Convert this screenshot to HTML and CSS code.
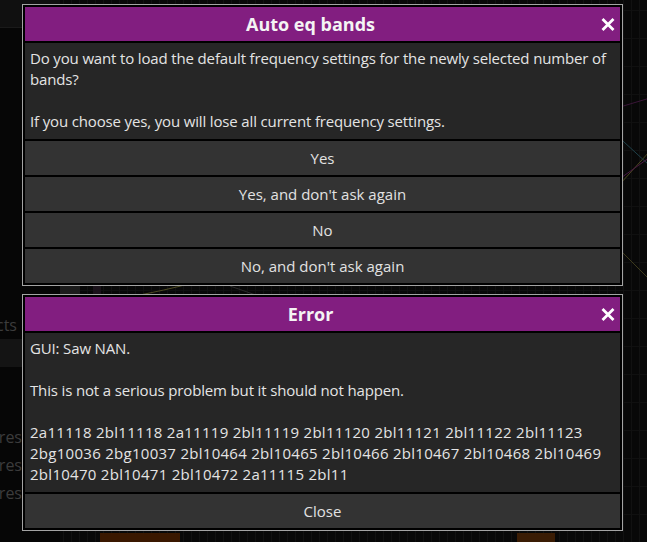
FILE: index.html
```html
<!doctype html>
<html lang="en">
  <head>
    <meta charset="UTF-8" />
    <meta name="viewport" content="width=device-width, initial-scale=1.0" />
    <title>Auto eq bands</title>
    <link rel="stylesheet" href="styles.css">
  </head>
  <body>
    <div class="app">
      <!-- graph canvas behind the dialogs -->
      <svg class="backdrop" width="647" height="542" viewBox="0 0 647 542">
        <line x1="560" y1="250" x2="660" y2="140" stroke="#4a4620" stroke-width="1" />
        <line x1="600" y1="120" x2="660" y2="175" stroke="#1f4048" stroke-width="1" />
        <line x1="600" y1="230" x2="660" y2="290" stroke="#3d3a1c" stroke-width="1" />
        <line x1="590" y1="200" x2="660" y2="150" stroke="#4a1a44" stroke-width="1" />
        <line x1="610" y1="110" x2="660" y2="95" stroke="#3a1638" stroke-width="1" />
        <path d="M140 295 Q165 290 185 285" stroke="#4c4a22" fill="none" />
        <line x1="230" y1="286" x2="270" y2="300" stroke="#2a2a2a" />
        <rect x="60" y="286" width="20" height="9" fill="#1c1c1c" />
        <rect x="93" y="286" width="8" height="9" fill="#1a121a" />
        <rect x="100" y="533" width="80" height="12" fill="#3a1800" />
        <rect x="517" y="533" width="38" height="12" fill="#3a1c04" />
      </svg>
      <aside class="side">
        <div class="side-top"></div>
        <div class="side-label first"><span>Effects</span></div>
        <div class="side-band"></div>
        <div class="side-label"><span>Scores</span></div>
        <div class="side-label"><span>Scores</span></div>
        <div class="side-label"><span>Scores</span></div>
      </aside>
    </div>

    <div class="overlay">
      <section class="dialog">
        <header class="dialog-head">
          <h1 class="title">Auto eq bands</h1>
          <span class="close">
            <svg width="14" height="13" viewBox="0 0 14 13">
              <path d="M1.5 1 L12.5 12 M12.5 1 L1.5 12" stroke="#fff" stroke-width="2.8" />
            </svg>
          </span>
        </header>
        <div class="dialog-body">
          <p>Do you want to load the default frequency settings for the newly selected number of bands?</p>
          <p>If you choose yes, you will lose all current frequency settings.</p>
        </div>
        <button class="btn">Yes</button>
        <button class="btn">Yes, and don't ask again</button>
        <button class="btn">No</button>
        <button class="btn">No, and don't ask again</button>
      </section>

      <section class="dialog">
        <header class="dialog-head">
          <h1 class="title">Error</h1>
          <span class="close">
            <svg width="14" height="13" viewBox="0 0 14 13">
              <path d="M1.5 1 L12.5 12 M12.5 1 L1.5 12" stroke="#fff" stroke-width="2.8" />
            </svg>
          </span>
        </header>
        <div class="dialog-body">
          <p>GUI: Saw NAN.</p>
          <p>This is not a serious problem but it should not happen.</p>
          <p class="codes">2a11118 2bl11118 2a11119 2bl11119 2bl11120 2bl11121 2bl11122 2bl11123 2bg10036 2bg10037 2bl10464 2bl10465 2bl10466 2bl10467 2bl10468 2bl10469 2bl10470 2bl10471 2bl10472 2a11115 2bl11</p>
        </div>
        <button class="btn">Close</button>
      </section>
    </div>
  </body>
</html>
```

FILE: styles.css
```css
html,
body {
  margin: 0;
  height: 100%;
  background: #070707;
  font-family: 'Open Sans', 'Noto Sans', sans-serif;
  color: #e4e4e4;
  overflow: hidden;
}
.app {
  position: relative;
  height: 100%;
  background-color: #080808;
  background-image:
    repeating-linear-gradient(90deg, transparent 0 7px, #111 7px 8px),
    repeating-linear-gradient(0deg, transparent 0 27px, #101010 27px 28px);
}
.backdrop {
  position: absolute;
  left: 0;
  top: 0;
}
.side {
  position: relative;
  width: 60px;
  height: 100%;
  background: #060606;
  display: flex;
  flex-direction: column;
}
.side-top {
  height: 27px;
  background: #101010;
  border-bottom: 1px solid #1a1a1a;
}
.side-label {
  width: 22px;
  height: 28px;
  display: flex;
  justify-content: flex-end;
  align-items: center;
  font-size: 16px;
  color: #3c3c3c;
  white-space: nowrap;
}
.side-label.first {
  width: 17px;
  margin-top: 283px;
}
.side-band {
  height: 28px;
  background: #141414;
  margin-bottom: 56px;
}

.overlay {
  position: absolute;
  inset: 0;
  display: flex;
  flex-direction: column;
  align-items: flex-start;
  gap: 8px;
  padding: 4px 0 0 22px;
}
.dialog {
  width: 595px;
  border: 1px solid #a4a4a4;
  padding: 2px;
  background: #000;
  display: flex;
  flex-direction: column;
  gap: 2px;
}
.dialog-head {
  height: 34px;
  background: #821e80;
  display: flex;
  align-items: center;
}
.title {
  flex: 1;
  margin: 0;
  text-align: center;
  font-size: 18px;
  font-weight: bold;
  color: #f4f4f4;
}
.close {
  width: 24px;
  height: 34px;
  display: flex;
  align-items: center;
  justify-content: center;
}
.dialog-body {
  background: #262626;
  padding: 5px 5px 7px 5px;
  font-size: 15px;
  line-height: 21px;
  letter-spacing: -0.15px;
}
.dialog-body p {
  margin: 0 0 21px 0;
}
.dialog-body p:last-child {
  margin-bottom: 0;
}
.dialog-body .codes {
  letter-spacing: 0.28px;
}
.btn {
  height: 34px;
  border: none;
  background: #333;
  color: #e2e2e2;
  font-family: inherit;
  font-size: 15px;
  padding: 0;
}
```
